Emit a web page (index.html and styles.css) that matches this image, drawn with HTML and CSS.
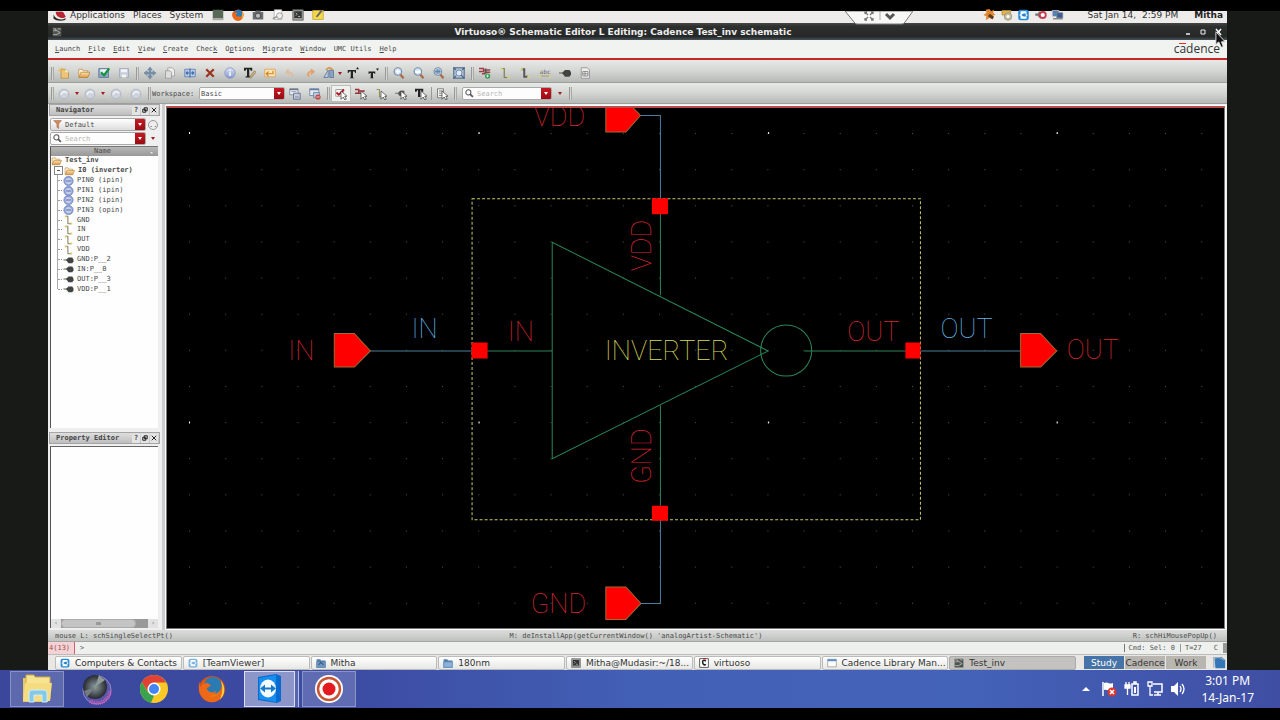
FILE: index.html
```html
<!DOCTYPE html>
<html lang="en">
<head>
<meta charset="utf-8">
<title>Virtuoso Schematic Editor</title>
<link rel="stylesheet" href="styles.css">
</head>
<body>
<svg class="defs" aria-hidden="true">
  <defs>
    <linearGradient id="gBlue" x1="0" y1="0" x2="0" y2="1"><stop offset="0" stop-color="#dde3f3"/><stop offset="1" stop-color="#8297cf"/></linearGradient>
    <linearGradient id="gFolder" x1="0" y1="0" x2="0" y2="1"><stop offset="0" stop-color="#fae4b0"/><stop offset="1" stop-color="#d89a45"/></linearGradient>
    <radialGradient id="gKnob"><stop offset="0" stop-color="#8f9c9e"/><stop offset="1" stop-color="#25292f"/></radialGradient>
    <radialGradient id="gFox"><stop offset="0" stop-color="#ffb01f"/><stop offset="1" stop-color="#d84a12"/></radialGradient>
    <symbol id="i-new" viewBox="0 0 16 16"><path d="M4 3h6l4 4v8H4z" fill="#edc578" stroke="#b28a45"/><path d="M1 1l3 4M5 0v4M0 5h4" stroke="#f4b730"/><path d="M10 3v4h4" fill="#fff0c8"/></symbol>
    <symbol id="i-folder" viewBox="0 0 16 16"><path d="M1 13V3h5l1 2h6v3" fill="#fff3d8" stroke="#c28a42"/><path d="M1 14l3-7h12l-3 7z" fill="url(#gFolder)" stroke="#b97c34"/></symbol>
    <symbol id="i-check" viewBox="0 0 16 16"><path d="M1 2h13v12H1z" fill="#8ca2c4" stroke="#54749a"/><path d="M3 3h9v6H3z" fill="#eef3f8"/><path d="M4 7l4 4 7-9" fill="none" stroke="#16943c" stroke-width="3"/></symbol>
    <symbol id="i-save" viewBox="0 0 16 16"><path d="M2 2h12v12H2z" fill="#c8ccd9" stroke="#9aa1b5"/><path d="M4 3h8v4H4zM5 10h6v4H5z" fill="#f3f4f7"/></symbol>
    <symbol id="i-move" viewBox="0 0 16 16"><path d="M8 0l3 4H9v3h3V5l4 3-4 3V9H9v3h2l-3 4-3-4h2V9H4v2L0 8l4-3v2h3V4H5z" fill="#7892ad" stroke="#536f8c" stroke-width=".6"/></symbol>
    <symbol id="i-copy" viewBox="0 0 16 16"><path d="M5 1h6l3 3v8H5z" fill="#eee" stroke="#999"/><path d="M2 5h6l2 2v8H2z" fill="#ddd" stroke="#929292"/></symbol>
    <symbol id="i-stretch" viewBox="0 0 16 16"><path d="M1 3h14v10H1z" fill="#b9cce8" stroke="#5475aa"/><path d="M8 2v12M3 8h4M9 8h4M5 6L3 8l2 2M11 6l2 2-2 2" fill="none" stroke="#426aaa" stroke-width="1.5"/></symbol>
    <symbol id="i-del" viewBox="0 0 16 16"><path d="M3 3l10 10M13 3L3 13" stroke="#9b3421" stroke-width="3"/></symbol>
    <symbol id="i-info" viewBox="0 0 16 16"><circle cx="8" cy="8" r="7" fill="url(#gBlue)" stroke="#8292c4"/><path d="M8 7v5M8 3.5v2" stroke="#fff" stroke-width="2"/></symbol>
    <symbol id="i-pinball" viewBox="0 0 16 16"><circle cx="8" cy="8" r="7.500" fill="#8d9fd2" stroke="#7083bd"/><circle cx="8" cy="8" r="5" fill="#c3cdea"/><path d="M4 8h8" stroke="#6e82be" stroke-width="2"/></symbol>
    <symbol id="i-tedit" viewBox="0 0 16 16"><path d="M0 1h11v4H9l-1-2H7v9l2 1v1H2v-1l2-1V3H3L2 5H0z" fill="#222"/><path d="M7 14l7-9 2 2-7 8z" fill="#d5b878" stroke="#6d6245" stroke-width=".8"/></symbol>
    <symbol id="i-repeat" viewBox="0 0 16 16"><path d="M1 3h14v10H1z" fill="#ffe4b4" stroke="#d99c42"/><path d="M12 5v4H4M6 6L3 9l3 3" fill="none" stroke="#c98424" stroke-width="1.5"/></symbol>
    <symbol id="i-undo" viewBox="0 0 16 16"><path d="M6 3L3 7l4 3M3 7c6-1 9 1 8 6" fill="none" stroke="#e2b997" stroke-width="2"/></symbol>
    <symbol id="i-redo" viewBox="0 0 16 16"><path d="M9 3l4 3-4 4M13 6C6 5 3 9 7 13" fill="none" stroke="#e2a26f" stroke-width="2.4"/></symbol>
    <symbol id="i-rotate" viewBox="0 0 16 16"><path d="M1 14L7 4v10z" fill="#b9c9e0" stroke="#536f99"/><path d="M9 4h5v10H9z" fill="#8ca4c4" stroke="#536f99"/><path d="M4 4c3-4 6-4 9 0" fill="none" stroke="#d98e32" stroke-width="2"/></symbol>
    <symbol id="i-tup" viewBox="0 0 16 16"><path d="M1 4h11v4h-1l-1-2H8v8l2 1H3l2-1V6H3L2 8H1z" fill="#222"/><path d="M12 3l2-3 2 3z" fill="#222"/></symbol>
    <symbol id="i-tdn" viewBox="0 0 16 16"><path d="M2 6h9v3h-1l-1-1H8v6l1 1H4l1-1V8H4L3 9H2z" fill="#222"/><path d="M12 2h4l-2 3z" fill="#222"/></symbol>
    <symbol id="i-zoom" viewBox="0 0 16 16"><path d="M9 9l5 6" stroke="#b06844" stroke-width="3"/><circle cx="6.500" cy="6" r="5" fill="#d5e3f2" stroke="#758fae" stroke-width="1.6"/></symbol>
    <symbol id="i-zin" viewBox="0 0 16 16"><use href="#i-zoom"/><path d="M6.500 3.500v5M4 6h5" stroke="#fff" stroke-width="1.8"/></symbol>
    <symbol id="i-zout" viewBox="0 0 16 16"><use href="#i-zoom"/><path d="M3 5h7v3H3z" fill="#fff"/></symbol>
    <symbol id="i-zsel" viewBox="0 0 16 16"><use href="#i-zoom"/><path d="M4 4h5v4H4zM6.500 3v6M3 6h7" fill="none" stroke="#54759c"/></symbol>
    <symbol id="i-zfit" viewBox="0 0 16 16"><path d="M1 1h14v14H1z" fill="#b9c9db" stroke="#6b839e" stroke-width="2"/><circle cx="8" cy="8" r="4" fill="#dfeaf6" stroke="#54718f"/><path d="M1 1l3 3M15 1l-3 3M1 15l3-3M11 11l4 4" stroke="#47637f" stroke-width="1.600"/></symbol>
    <symbol id="i-inst" viewBox="0 0 16 16"><path d="M0 2h6v4H0M4 9h4M6 4h9M7 7h8" fill="none" stroke="#9b4143" stroke-width="1.8"/><path d="M9 2v7" stroke="#555" stroke-width="2"/><circle cx="11.500" cy="12" r="3.500" fill="#2a9b4b"/><path d="M11.500 10v4M9.500 12h4" stroke="#fff"/></symbol>
    <symbol id="i-wire" viewBox="0 0 16 16"><path d="M3 2h4v12h5" fill="none" stroke="#817b57" stroke-width="1.600"/><path d="M2 1h3v3H2zM11 12h3v3h-3z" fill="#ddd079"/></symbol>
    <symbol id="i-wirew" viewBox="0 0 16 16"><path d="M3 3h4v10h5" fill="none" stroke="#555" stroke-width="2.600"/><path d="M2 1h3v3H2zM11 12h3v3h-3z" fill="#ddd079"/></symbol>
    <symbol id="i-label" viewBox="0 0 16 16"><text x="1" y="9" font-size="8" font-family="DejaVu Sans" fill="#666">abc</text><path d="M0 12h16" stroke="#a8a27c" stroke-width="1.500"/><path d="M0 11h3v3H0zM13 11h3v3h-3z" fill="#d9cf89"/></symbol>
    <symbol id="i-pin" viewBox="0 0 16 16"><path d="M0 8h6" stroke="#838469" stroke-width="2"/><path d="M4 8l4-4h6l2 3v3l-2 3H8z" fill="#414443"/></symbol>
    <symbol id="i-sheet" viewBox="0 0 16 16"><path d="M3 1h8l3 3v11H3z" fill="#eee" stroke="#858585"/><path d="M5 6h7v6H5zM5 9h7M8 6v6" fill="none" stroke="#777"/></symbol>
    <symbol id="i-orb" viewBox="0 0 16 16"><circle cx="8" cy="8" r="6.500" fill="#cdd2dd" stroke="#a6adbd"/><path d="M4 9c2-5 6-5 8-2" fill="none" stroke="#f4f5f8" stroke-width="2"/></symbol>
    <symbol id="i-wsave" viewBox="0 0 16 16"><path d="M1 1h11v8H1z" fill="#f7f8fb" stroke="#69768e"/><path d="M1 2h11" stroke="#69768e" stroke-width="2"/><path d="M6 7h9v8H6z" fill="#c3cbda" stroke="#536384"/><path d="M3 5h7M8 12h5" stroke="#69768e"/></symbol>
    <symbol id="i-wdel" viewBox="0 0 16 16"><path d="M1 1h12v9H1z" fill="#e4eaf3" stroke="#667c9e"/><path d="M1 2h12" stroke="#667c9e" stroke-width="2"/><path d="M6 6h8v7H6z" fill="#b8c9e1" stroke="#667c9e"/><circle cx="12" cy="12" r="3.500" fill="#c44743"/><path d="M10 12h4" stroke="#fff"/></symbol>
    <symbol id="i-arrow" viewBox="0 0 16 16"><path d="M8 4v11l3-3 2 4 2-1-2-4h3z" fill="#fff" stroke="#444"/></symbol>
    <symbol id="i-selc" viewBox="0 0 16 16"><path d="M1 2h10v9H1z" fill="#fff" stroke="#888"/><path d="M2 6l3 3 7-7" fill="none" stroke="#b51a25" stroke-width="2.500"/><use href="#i-arrow"/></symbol>
    <symbol id="i-seli" viewBox="0 0 16 16"><path d="M0 2h5v5H0M4 4h9M5 7h5" fill="none" stroke="#9b3033" stroke-width="1.800"/><use href="#i-arrow"/></symbol>
    <symbol id="i-selw" viewBox="0 0 16 16"><path d="M2 2h4v10h3" fill="none" stroke="#99905a" stroke-width="1.500"/><use href="#i-arrow"/></symbol>
    <symbol id="i-selp" viewBox="0 0 16 16"><path d="M0 7h4M4 7l3-3h5v6H6z" fill="#555" stroke="#555"/><use href="#i-arrow"/></symbol>
    <symbol id="i-selt" viewBox="0 0 16 16"><path d="M0 1h11v4H9L8 3H7v9H4V3H3L2 5H0z" fill="#222"/><use href="#i-arrow"/></symbol>
    <symbol id="i-sels" viewBox="0 0 16 16"><path d="M2 1h8v12H2zM4 4h5M4 7h5M4 10h5" fill="#eee" stroke="#666"/><use href="#i-arrow"/></symbol>
    <symbol id="i-mag" viewBox="0 0 16 16"><path d="M9 9l5 5" stroke="#555" stroke-width="3"/><circle cx="6" cy="6" r="4.500" fill="none" stroke="#555" stroke-width="1.800"/></symbol>
    <symbol id="i-funnel" viewBox="0 0 16 16"><path d="M1 1h14l-5 6v8l-3-2V7z" fill="#d28a5e" stroke="#a96c4b"/></symbol>
    <symbol id="i-tv" viewBox="0 0 16 16"><rect x="1" y="1" width="14" height="14" rx="3" fill="#2788d4"/><path d="M4 3h8v4l2 1-2 1v4H4V9L2 8l2-1z" fill="#fff"/><path d="M5 8l3-2h3v4H8z" fill="#2680cf"/></symbol>
    <symbol id="i-bfold" viewBox="0 0 16 16"><path d="M1 2h6l1 2h7v11H1z" fill="#527daa"/><path d="M1 6h14v9H1z" fill="#8bb1d7" stroke="#527daa"/></symbol>
    <symbol id="i-home" viewBox="0 0 16 16"><path d="M1 2h6l1 2h7v11H1z" fill="#527daa"/><path d="M1 6h14v9H1z" fill="#7398c0" stroke="#527daa"/><path d="M4 11l4-4 4 4" fill="none" stroke="#315e8c" stroke-width="2"/></symbol>
    <symbol id="i-term" viewBox="0 0 16 16"><path d="M1 1h14v14H1z" fill="#999" stroke="#666"/><path d="M3 3h10v9H3z" fill="#343735"/><path d="M5 5l2 2-2 2M8 10h3" fill="none" stroke="#ccc"/></symbol>
    <symbol id="i-c" viewBox="0 0 16 16"><path d="M1 1h14v14H1z" fill="#fff" stroke="#555" stroke-width="1.500"/><path d="M11 5c-4-3-6 0-5 3s3 4 5 2" fill="none" stroke="#222" stroke-width="2.500"/><path d="M7 1h4" stroke="#b22" stroke-width="2"/></symbol>
    <symbol id="i-win" viewBox="0 0 16 16"><path d="M1 2h14v12H1z" fill="#fff" stroke="#888"/><path d="M1 2h14v3H1z" fill="#5d8fbd"/></symbol>
    <symbol id="i-sch" viewBox="0 0 16 16"><path d="M1 1h14v14H1z" fill="#505451"/><path d="M2 3h4v3H2M6 5l7 4-7 4M2 12h4M9 3h5" fill="none" stroke="#bbc0b9" stroke-width="1.300"/></symbol>
    <symbol id="i-fox" viewBox="0 0 32 32"><circle cx="16" cy="16" r="15" fill="url(#gFox)"/><circle cx="17" cy="12" r="10" fill="#2a7bb4"/><path d="M2 7c0 3 0 5 1 7 2-4 5-5 8-5l4 3-5 3c1 5 7 6 11 3-1 5-8 8-13 4 8 8 20 2 19-10 5 9 0 19-11 19S-2 19 2 7z" fill="#ee6818"/><path d="M26 6c6 8 5 17-1 22 3-7 4-13 1-22z" fill="#ffd13a"/></symbol>
  </defs>
</svg>

<main class="desktop">
 <div class="remote">
  <header class="gnome-panel">
    <nav class="gnome-menu">
      <svg class="hat" viewBox="0 0 20 14"><path d="M4 1c4 1 8-2 11 1l3 6c-4 4-14 1-14-7z" fill="#b72633"/><path d="M1 5c3 8 11 8 17 5 2 4-12 5-17 1z" fill="#222"/></svg>
      <button>Applications</button><button>Places</button><button>System</button>
      <span class="launchers">
        <svg viewBox="0 0 16 16"><path d="M1 1h14v13H1z" fill="#596958"/><path d="M1 12h14v3H1z" fill="#aaa"/></svg>
        <svg><use href="#i-fox"/></svg>
        <svg viewBox="0 0 16 16"><path d="M1 4h3l1-2h6l1 2h3v10H1z" fill="#686e70"/><circle cx="8" cy="9" r="3.500" fill="#bbb" stroke="#333"/></svg>
        <svg viewBox="0 0 16 16"><path d="M3 1h10v13H3z" fill="#fff" stroke="#aaa"/><circle cx="10" cy="9" r="4" fill="#eee" stroke="#888"/><path d="M1 13l6-3" stroke="#999" stroke-width="2"/></svg>
        <svg><use href="#i-term"/></svg>
        <svg viewBox="0 0 16 16"><path d="M1 2h14v12H1z" fill="#f2d94b" stroke="#c4a82c"/><path d="M5 10l7-9 2 2-7 8z" fill="#666"/></svg>
      </span>
    </nav>
    <div class="gnome-status">
      <svg viewBox="0 0 16 16"><path d="M8 0l2 3 4-2-1 4 3 3-4 1 1 5-5-2-5 3 1-5-4-2 4-3-1-4z" fill="#e08732"/><path d="M7 8l6 4" stroke="#603818" stroke-width="4"/></svg>
      <svg viewBox="0 0 16 16"><path d="M2 2h12l-2 6H2z" fill="#e7b63c" stroke="#a98a4a"/><circle cx="10" cy="10" r="5" fill="#c7bda2" stroke="#938b77"/><circle cx="10" cy="10" r="2" fill="#fff"/></svg>
      <svg><use href="#i-tv"/></svg>
      <svg viewBox="0 0 16 16"><path d="M1 6h3l4-4v11L4 9H1z" fill="#777"/><circle cx="11" cy="8" r="4" fill="#fff" stroke="#c63f50" stroke-width="2.500"/></svg>
      <svg viewBox="0 0 16 16"><path d="M1 2h9v8H1z" fill="#577fb2" stroke="#ccc"/><path d="M7 5h8v7H7z" fill="#365d98" stroke="#888"/><path d="M2 13h13" stroke="#888" stroke-width="2"/></svg>
      <time>Sat Jan 14,&nbsp; 2:59 PM</time><strong>Mitha</strong>
    </div>
    <div class="tv-tab"><svg viewBox="0 0 68 14" preserveAspectRatio="none"><path d="M0 0h68l-8 11q-1 2-3 2H12q-2 0-3-2z" fill="#f8f8f7" stroke="#777"/><path d="M20 1l3 3M28 1l-3 3M20 9l3-3M28 9l-3-3M20 3V1h2M26 1h2v2M20 7v2h2M26 9h2V7" fill="none" stroke="#777" stroke-width="1.300"/><path d="M35 0v9" stroke="#aaa"/><path d="M41 3l4 4 4-4" fill="none" stroke="#555" stroke-width="3"/></svg></div>
  </header>

  <section class="window">
    <header class="titlebar">
      <svg class="app"><use href="#i-sch"/></svg>
      <h1>Virtuoso® Schematic Editor L Editing: Cadence Test_inv schematic</h1>
      <div class="winbtns"><button aria-label="Minimize"><svg viewBox="0 0 8 8"><path d="M2 6h4" stroke="#eee" stroke-width="1.500"/></svg></button><button aria-label="Maximize"><svg viewBox="0 0 8 8"><path d="M2 2h4v4H2z" fill="none" stroke="#eee"/></svg></button><button aria-label="Close"><svg viewBox="0 0 8 8"><path d="M2 1l5 6M7 1L2 7" stroke="#fff" stroke-width="1.500"/></svg></button></div>
    </header>
    <nav class="menubar">
      <button><u>L</u>aunch</button><button><u>F</u>ile</button><button><u>E</u>dit</button><button><u>V</u>iew</button><button><u>C</u>reate</button><button>Chec<u>k</u></button><button>O<u>p</u>tions</button><button><u>M</u>igrate</button><button><u>W</u>indow</button><button>UMC Utils</button><button><u>H</u>elp</button>
      <span class="brand">c<span class="macron">a</span>dence</span>
    </nav>
    <div class="toolbar">
      <i class="grip"></i>
      <button aria-label="New"><svg><use href="#i-new"/></svg></button><button aria-label="Open"><svg><use href="#i-folder"/></svg></button><button aria-label="Check and save"><svg><use href="#i-check"/></svg></button><button aria-label="Save"><svg><use href="#i-save"/></svg></button>
      <i class="grip wide"></i>
      <button aria-label="Move"><svg><use href="#i-move"/></svg></button><button aria-label="Copy"><svg><use href="#i-copy"/></svg></button><button aria-label="Stretch"><svg><use href="#i-stretch"/></svg></button><button aria-label="Delete"><svg><use href="#i-del"/></svg></button><button aria-label="Properties"><svg><use href="#i-info"/></svg></button><button aria-label="Edit text"><svg><use href="#i-tedit"/></svg></button><button aria-label="Repeat"><svg><use href="#i-repeat"/></svg></button><button aria-label="Undo"><svg><use href="#i-undo"/></svg></button><button aria-label="Redo"><svg><use href="#i-redo"/></svg></button><button class="narrow" aria-label="Rotate"><svg><use href="#i-rotate"/></svg></button><button class="drop" aria-label="Rotate options"></button><button aria-label="Increase text"><svg><use href="#i-tup"/></svg></button><button aria-label="Decrease text"><svg><use href="#i-tdn"/></svg></button>
      <i class="grip wide"></i>
      <button aria-label="Zoom in"><svg><use href="#i-zin"/></svg></button><button aria-label="Zoom out"><svg><use href="#i-zout"/></svg></button><button aria-label="Zoom to selection"><svg><use href="#i-zsel"/></svg></button><button aria-label="Fit"><svg><use href="#i-zfit"/></svg></button>
      <i class="grip wide"></i>
      <button aria-label="Instance"><svg><use href="#i-inst"/></svg></button><button aria-label="Wire"><svg><use href="#i-wire"/></svg></button><button aria-label="Wide wire"><svg><use href="#i-wirew"/></svg></button><button aria-label="Label"><svg><use href="#i-label"/></svg></button><button aria-label="Pin"><svg><use href="#i-pin"/></svg></button><button aria-label="Sheet"><svg><use href="#i-sheet"/></svg></button>
    </div>
    <div class="toolbar second">
      <i class="grip"></i>
      <button aria-label="Back"><svg><use href="#i-orb"/></svg></button><button class="drop" aria-label="Back history"></button><button aria-label="Forward"><svg><use href="#i-orb"/></svg></button><button class="drop" aria-label="Forward history"></button><button aria-label="Up"><svg><use href="#i-orb"/></svg></button><button aria-label="Top"><svg><use href="#i-orb"/></svg></button>
      <i class="grip wide"></i>
      <label class="ws" for="workspace">Workspace:</label>
      <span class="field workspace"><select id="workspace"><option>Basic</option></select><i class="red"></i></span>
      <button aria-label="Save workspace"><svg><use href="#i-wsave"/></svg></button><button aria-label="Delete workspace"><svg><use href="#i-wdel"/></svg></button>
      <i class="grip wide"></i>
      <button class="on" aria-label="Select all types"><svg><use href="#i-selc"/></svg></button><button aria-label="Select instances"><svg><use href="#i-seli"/></svg></button><button aria-label="Select wires"><svg><use href="#i-selw"/></svg></button><button aria-label="Select pins"><svg><use href="#i-selp"/></svg></button><button aria-label="Select text"><svg><use href="#i-selt"/></svg></button>
      <i class="rule"></i>
      <button aria-label="Selection form"><svg><use href="#i-sels"/></svg></button>
      <i class="grip wide"></i>
      <span class="field find"><svg><use href="#i-mag"/></svg><input aria-label="Search design" placeholder="Search"><button class="red" aria-label="Search options"></button></span>
      <button class="drop far" aria-label="More"></button>
      <i class="grip"></i>
    </div>

    <div class="work">
      <aside class="docks">
        <section class="dock nav">
          <header><h2>Navigator</h2><button>?</button><button aria-label="Float"><svg viewBox="0 0 8 8"><path d="M3 1h4v4H3zM1 3h4v4H1z" fill="none" stroke="#222" stroke-width="1.300"/></svg></button><button aria-label="Close"><svg viewBox="0 0 8 8"><path d="M1 1l6 6M7 1L1 7" stroke="#222" stroke-width="1.300"/></svg></button></header>
          <div class="filter"><span class="field grey"><svg><use href="#i-funnel"/></svg><select aria-label="Filter"><option>Default</option></select><i class="red"></i></span><button class="round" aria-label="Filter options">..</button></div>
          <div class="filter"><span class="field"><svg><use href="#i-mag"/></svg><input aria-label="Search navigator" placeholder="Search"><button class="red" aria-label="Search options"></button></span><button class="drop" aria-label="More"></button></div>
          <div class="tree">
            <div class="treehead"><span>Name</span><svg viewBox="0 0 8 6"><path d="M1 5l3-3 3 3z" fill="#eee" stroke="#888" stroke-width=".6"/></svg></div>
            <ul>
              <li class="root"><svg><use href="#i-folder"/></svg>Test_inv</li>
              <li class="inst"><svg><use href="#i-folder"/></svg>I0 (inverter)</li>
              <li><svg><use href="#i-pinball"/></svg>PIN0 (ipin)</li>
              <li><svg><use href="#i-pinball"/></svg>PIN1 (ipin)</li>
              <li><svg><use href="#i-pinball"/></svg>PIN2 (ipin)</li>
              <li><svg><use href="#i-pinball"/></svg>PIN3 (opin)</li>
              <li><svg><use href="#i-wire"/></svg>GND</li>
              <li><svg><use href="#i-wire"/></svg>IN</li>
              <li><svg><use href="#i-wire"/></svg>OUT</li>
              <li><svg><use href="#i-wire"/></svg>VDD</li>
              <li><svg><use href="#i-pin"/></svg>GND:P__2</li>
              <li><svg><use href="#i-pin"/></svg>IN:P__0</li>
              <li><svg><use href="#i-pin"/></svg>OUT:P__3</li>
              <li><svg><use href="#i-pin"/></svg>VDD:P__1</li>
            </ul>
          </div>
        </section>
        <section class="dock props">
          <header><h2>Property Editor</h2><button>?</button><button aria-label="Float"><svg viewBox="0 0 8 8"><path d="M3 1h4v4H3zM1 3h4v4H1z" fill="none" stroke="#222" stroke-width="1.300"/></svg></button><button aria-label="Close"><svg viewBox="0 0 8 8"><path d="M1 1l6 6M7 1L1 7" stroke="#222" stroke-width="1.300"/></svg></button></header>
          <div class="propbox"><div class="hscroll"><button aria-label="Scroll left">‹</button><i><b></b></i><button aria-label="Scroll right">›</button></div></div>
        </section>
      </aside>
      <div class="canvas">
        <svg viewBox="167 108 1057 519" preserveAspectRatio="xMidYMid slice" role="img" aria-label="Inverter schematic">
          <defs><pattern id="dots" x="190" y="133" width="36.08" height="36.06" patternUnits="userSpaceOnUse"><rect width="1" height="1" fill="#555"/></pattern></defs>
          <rect x="167" y="108" width="1057" height="519" fill="#000"/>
          <rect x="167" y="108" width="1057" height="519" fill="url(#dots)"/>
          <path d="M190 132h1v2h-1zM479 132h1v2h-1zM768 132h1v2h-1zM1056 132h1v2h-1zM190 421h1v2h-1zM479 421h1v2h-1zM768 421h1v2h-1zM1056 421h1v2h-1z" fill="#fff"/>
          <g class="wire"><path d="M640 115.500h20.500V199M371 350.500h102M920 350.500h101M660.500 519v83.500H640"/></g>
          <g class="device"><path d="M552.500 242v216L768 350.500zM660.500 213v82M660.500 405v100M487 350.500h65M804 350.500h102"/><circle cx="786" cy="350" r="25.500"/></g>
          <path class="bbox" d="M472.500 198.500h447.500v320.500H472.500z"/>
          <g class="pin"><path d="M606 100h20l14.500 15.500L626 132h-20zM606 586h20l15 16.500-15 16h-20zM335 333h20l16 17.500-16 16h-20zM1020 333h20l16 17.500-16 16h-20z"/></g>
          <path d="M652 198h16v16h-16zM652 505h16v15h-16zM472 342h16v16h-16zM905 342h15v16h-15z" fill="#f00"/>
          <g class="lbl red-l"><text x="534" y="126">VDD</text><text x="531" y="612">GND</text><text x="289" y="360">IN</text><text x="508" y="341">IN</text><text x="847" y="341">OUT</text><text x="1066" y="359">OUT</text><text transform="translate(651 271) rotate(-90)">VDD</text><text transform="translate(651 483) rotate(-90)">GND</text></g>
          <g class="lbl blue-l"><text x="412" y="338">IN</text><text x="940" y="338">OUT</text></g>
          <g class="lbl yel-l"><text x="605" y="360">INVERTER</text></g>
        </svg>
      </div>
    </div>
    <footer class="mouse"><span>mouse L: schSingleSelectPt()</span><span>M: deInstallApp(getCurrentWindow() 'analogArtist-Schematic')</span><span>R: schHiMousePopUp()</span></footer>
    <footer class="prompt"><span class="count">4(13)</span><span class="gt">&gt;</span><span class="cmd">Cmd: Sel: 0</span><span class="temp">T=27</span><span class="cc">C</span><i></i></footer>
  </section>

  <footer class="gnome-tasks">
    <div class="tasks">
      <button><svg><use href="#i-tv"/></svg><span>Computers &amp; Contacts</span></button>
      <button><svg class="dim"><use href="#i-tv"/></svg><span>[TeamViewer]</span></button>
      <button><svg><use href="#i-home"/></svg><span>Mitha</span></button>
      <button><svg><use href="#i-bfold"/></svg><span>180nm</span></button>
      <button><svg><use href="#i-term"/></svg><span>Mitha@Mudasir:~/18...</span></button>
      <button><svg><use href="#i-c"/></svg><span>virtuoso</span></button>
      <button><svg><use href="#i-win"/></svg><span>Cadence Library Man...</span></button>
      <button class="active"><svg><use href="#i-sch"/></svg><span>Test_inv</span></button>
    </div>
    <div class="spaces"><button class="cur">Study</button><button>Cadence</button><button>Work</button></div>
    <svg class="trash" viewBox="0 0 16 16"><path d="M2 3l8-2 5 4v10H3z" fill="#3377b8"/><path d="M1 14V2h8l4 3" fill="none" stroke="#99a9bb" stroke-width="1.500"/></svg>
  </footer>
  <svg class="cursor" viewBox="0 0 12 18"><path d="M1 0v14l3-3 3 6 2-1-2-5h4z" fill="#111" stroke="#ddd"/></svg>
 </div>

 <footer class="taskbar">
  <div class="apps">
    <button class="open first" aria-label="Explorer"><svg viewBox="0 0 32 32"><path d="M2 5h10l2 3h13v21H2z" fill="#e7c866"/><path d="M5 2h8l1 2h15v22H5z" fill="#f7e493" stroke="#cda944"/><path d="M4 10h27l-2 18H2z" fill="#f5dc80"/><path d="M8 29V20q0-3 3-3h12q3 0 3 3v9h-5v-7h-8v7z" fill="#86c8e8" stroke="#cfedf8"/></svg></button>
    <button aria-label="Recorder"><svg viewBox="0 0 32 32"><circle cx="17" cy="17" r="14" fill="#5557a6" stroke="#9c8bc8"/><path d="M10 28a13 13 0 0 0 20-10" fill="none" stroke="#cf55b8" stroke-width="4" stroke-dasharray="1 1"/><circle cx="15" cy="14" r="12" fill="url(#gKnob)"/><path d="M15 14L19 2l6 5z" fill="#8d9a98"/><path d="M15 14L4 18l3 6z" fill="#747e80"/></svg></button>
    <button aria-label="Chrome"><svg viewBox="0 0 32 32"><circle cx="16" cy="16" r="14" fill="#fbc926"/><path d="M16 2a14 14 0 0 1 12.200 7.500H16L10 19 3.800 9A14 14 0 0 1 16 2z" fill="#df4335"/><path d="M3.800 9L10 19.500l6 3L13 29.700A14 14 0 0 1 3.800 9z" fill="#3ba34f"/><circle cx="16" cy="16" r="6.500" fill="#fff"/><circle cx="16" cy="16" r="5" fill="#4285f4"/></svg></button>
    <button aria-label="Firefox"><svg viewBox="0 0 32 32"><use href="#i-fox" x="2" y="2" width="28" height="28"/></svg></button>
    <button class="open stack" aria-label="TeamViewer"><svg viewBox="0 0 32 32"><path d="M4 4l18-3 5 2v25l-4 2L4 27z" fill="#066bd1"/><path d="M5 5l17-3v27L5 26z" fill="#178eed"/><ellipse cx="14" cy="15.500" rx="8" ry="9" fill="#f5fafe"/><path d="M6 15.500l5-4v3h6v-3l5 4-5 4v-3h-6v3z" fill="#167ac9"/></svg></button>
    <button class="open last" aria-label="Screen recorder"><svg viewBox="0 0 32 32"><circle cx="16" cy="16" r="14" fill="#fff"/><circle cx="16" cy="16" r="11" fill="none" stroke="#c95433" stroke-width="2.500"/><circle cx="16" cy="16" r="6.500" fill="#e31a1f"/></svg></button>
  </div>
  <div class="tray">
    <svg viewBox="0 0 16 16"><path d="M4 10l4-4 4 4z" fill="#fff"/></svg>
    <svg viewBox="0 0 16 16"><path d="M2 1v14" stroke="#fff" stroke-width="1.500"/><path d="M3 2c4-2 5 2 9 0v7c-4 2-5-1-9 0z" fill="#fff"/><circle cx="11" cy="11" r="4.500" fill="#d9372f"/><path d="M9 9l4 4M13 9l-4 4" stroke="#fff" stroke-width="1.500"/></svg>
    <svg viewBox="0 0 16 16"><path d="M8 3h6v11H8zM10 1h2v2h-2z" fill="none" stroke="#fff" stroke-width="1.500"/><path d="M10 6h2v6h-2z" fill="#fff"/><path d="M1 4h5v3H1zM2 1v3M5 1v3M3.500 7v7" fill="#fff" stroke="#fff" stroke-width="1.300"/></svg>
    <svg viewBox="0 0 16 16"><path d="M6 3h9v8H7M11 11v3M7 14h7" fill="none" stroke="#fff" stroke-width="1.500"/><path d="M1 1h4v4H1zM3 5v9h3" fill="none" stroke="#fff" stroke-width="1.300"/></svg>
    <svg viewBox="0 0 16 16"><path d="M1 5h3l4-4v14l-4-4H1z" fill="#fff"/><path d="M10 5q2 3 0 6M12 3q4 5 0 10" fill="none" stroke="#fff" stroke-width="1.300"/></svg>
    <div class="clock"><time>3:01 PM</time><time>14-Jan-17</time></div>
  </div>
 </footer>
</main>
</body>
</html>
```
FILE: styles.css
```css
* { box-sizing: border-box; }
body { margin: 0; background: #000; font-family: "DejaVu Sans", sans-serif; font-size: 9px; color: #333; }
button, select, input { font: inherit; color: inherit; border: 0; padding: 0; margin: 0; background: none; }
select { appearance: none; }
svg { display: block; }
h1, h2, ul { margin: 0; padding: 0; }
.defs { position: absolute; width: 0; height: 0; }

.desktop { display: flex; flex-direction: column; height: 100vh; padding: 11px 0 12px; }
.remote { position: relative; flex: 1; min-height: 0; display: flex; flex-direction: column; border-left: 48px solid #181a17; border-right: 53px solid #181a17; background: #efeeec; }

/* GNOME top panel */
.gnome-panel { position: relative; flex: none; height: 12px; display: flex; justify-content: space-between; background: #edecea; line-height: 8px; z-index: 2; }
.gnome-menu, .gnome-status, .launchers { display: flex; }
.gnome-menu button { line-height: 8px; height: 8px; margin-right: 8px; color: #333; }
.hat { width: 16px; height: 10px; margin: 0 2px 0 4px; }
.launchers { gap: 8px; margin-left: 1px; }
.launchers svg { width: 12px; height: 12px; margin-top: -2px; }
.gnome-status { padding-right: 4px; }
.gnome-status svg { width: 13px; height: 12px; margin: -2px 4px 0 0; }
.gnome-status time { margin: 0 16px 0 20px; }
.gnome-status strong { color: #222; }
.tv-tab { position: absolute; left: 797px; top: 0; width: 68px; }
.tv-tab svg { width: 100%; height: 14px; }

/* Editor window */
.window { flex: 1; min-height: 0; display: flex; flex-direction: column; font-family: "DejaVu Sans Mono", monospace; font-size: 7px; color: #4a4a4a; }
.titlebar { flex: none; height: 17px; display: flex; align-items: center; background: linear-gradient(#454744, #2d302e 20%, #252826 80%, #48525a); color: #eee; padding: 0 5px 0 4px; }
.titlebar h1 { flex: 1; text-align: center; font: bold 9px/16px "DejaVu Sans", sans-serif; }
.titlebar .app { width: 10px; height: 10px; }
.winbtns { display: flex; gap: 7px; }
.winbtns svg { width: 8px; height: 8px; }
.menubar { flex: none; height: 20px; display: flex; align-items: center; gap: 8px; padding: 0 7px 0 7px; background: #f1f3f1; border-bottom: 2px solid #c22626; }
.brand { margin-left: auto; font: 12px/16px "Open Sans", sans-serif; color: #333; }
.macron { border-top: 1px solid #d33; display: inline-block; line-height: 10px; }
.toolbar { flex: none; height: 23px; display: flex; align-items: center; background: linear-gradient(#e8e9e7, #d4d6d4 50%, #b7b9b7); border-bottom: 1px solid #9c9f9c; padding: 4px 0 0 3px; }
.toolbar.second { height: 21px; padding-top: 1px; }
.toolbar > button { flex: none; width: 20px; height: 17px; display: grid; place-items: center; }
.toolbar > button.narrow { width: 17px; }
.toolbar button svg { width: 12px; height: 12px; }
.toolbar .on { background: #f0f0ef; border: 1px solid #bbb; }
.grip { flex: none; width: 3px; height: 13px; border-left: 1px solid #999; border-right: 1px solid #aaa; background: #d5d5d5; }
.grip.wide { margin: 0 1px 0 2px; }
.rule { width: 1px; height: 13px; background: #999; }
.toolbar > .drop, .drop { width: 6px; height: 8px; display: grid; place-items: center; }
.drop::after, .red::after { content: ""; border: 2px solid transparent; border-top: 3px solid #a31a1f; border-bottom: 0; }
.toolbar > .far { margin: 0 6px 0 5px; }
.field { display: flex; align-items: center; height: 13px; border: 1px solid #aaa; border-radius: 2px; background: #fdfdfd; overflow: hidden; }
.field select, .field input { flex: 1; min-width: 0; width: 0; outline: 0; }
.field input::placeholder { color: #b5b5b5; opacity: 1; }
.field svg { width: 9px; height: 9px; margin: 0 3px 0 2px; flex: none; }
.red { flex: none; width: 10px; height: 12px; display: grid; place-items: center; background: linear-gradient(#c81923, #950a12); }
.red::after { border-top-color: #fff; }
.ws { width: 47px; }
.workspace { width: 86px; padding-left: 1px; }
.find { width: 90px; margin-left: 4px; }

/* Docks and canvas */
.work { flex: 1; min-height: 0; display: flex; background: #f0f0f0; }
.docks { flex: none; width: 118px; display: flex; flex-direction: column; gap: 4px; background: #efefef; border-right: 4px solid #cdced0; padding: 0 2px 2px 1px; }
.dock { display: flex; flex-direction: column; min-height: 0; }
.nav { flex: 323; }
.props { flex: 195; }
.dock header { flex: none; height: 12px; display: flex; align-items: center; gap: 1px; padding: 0 1px 0 6px; background: linear-gradient(#dedede, #bebebe); border: 1px solid #a5a5a5; }
.dock h2 { flex: 1; font-size: 7px; font-weight: bold; color: #444; white-space: nowrap; }
.dock header button { width: 8px; height: 9px; display: grid; place-items: center; background: #e4e4e4; font-weight: bold; }
.dock header svg { width: 6px; height: 6px; }
.filter { flex: none; display: flex; align-items: center; gap: 2px; margin: 2px 2px 0 1px; }
.filter + .filter { margin-top: 1px; }
.filter .field { flex: 1; }
.filter .drop { width: 10px; }
.grey { background: linear-gradient(#fff, #ddd); }
.round { width: 10px; height: 10px; border: 1px solid #999; border-radius: 50%; line-height: 6px; background: #eee; }
.tree { flex: 1; min-height: 0; margin: 1px 2px 0 1px; background: #fdfefd; border-left: 1px solid #555; border-top: 1px solid #777; }
.treehead { position: relative; height: 9px; background: linear-gradient(#b8b8b8, #989898); text-align: center; line-height: 9px; padding-right: 4px; }
.treehead svg { position: absolute; right: 3px; top: 2px; width: 7px; height: 6px; }
.tree ul { height: 138px; display: grid; grid-auto-rows: minmax(0, 1fr); list-style: none; background: linear-gradient(#aaa, #aaa) 6px 18px / 1px 115px no-repeat; }
.tree li { display: flex; align-items: center; gap: 3px; padding-left: 7px; white-space: nowrap; line-height: 9px; }
.tree li::before { content: ""; width: 4px; border-top: 1px dotted #999; margin-right: -2px; }
.tree li svg { flex: none; width: 11px; height: 10px; }
.tree .root { padding-left: 0; font-weight: bold; }
.tree .root::before { display: none; }
.tree .inst { padding-left: 3px; font-weight: bold; }
.tree .inst::before { width: 7px; height: 7px; border: 1px solid #888; background: linear-gradient(#555, #555) center / 3px 1px no-repeat #fff; }
.propbox { flex: 1; margin: 2px 2px 0 1px; display: flex; align-items: flex-end; border-left: 1px solid #555; border-top: 1px solid #666; background: #fdfefd; }
.hscroll { flex: 1; height: 9px; display: flex; background: #999; }
.hscroll button { width: 10px; background: #e2e2e2; line-height: 7px; color: #888; }
.hscroll i { flex: 1; }
.hscroll b { display: block; width: 86%; height: 9px; border: 1px solid #aaa; border-radius: 4px; background: linear-gradient(#999, #999) center / 5px 3px no-repeat #c3c4c3; }
.canvas { flex: 1; min-width: 0; margin: 2px 2px 1px 0; border: 1px solid #777; border-top: 2px solid #b94d4d; outline: 1px solid #fff; background: #000; }
.canvas svg { width: 100%; height: 100%; }
.wire { fill: none; stroke: #4a7f9e; }
.device { fill: none; stroke: #2b8558; }
.bbox { fill: none; stroke: #c8c868; stroke-dasharray: 3 2; }
.pin { fill: #f00; stroke: #a06a30; stroke-width: 1; }
.lbl { font-family: Roboto, sans-serif; font-weight: 100; font-size: 27px; }
.red-l { fill: #d8262e; }
.blue-l { fill: #64b4e6; }
.yel-l { fill: #dcdc5c; }

/* Status rows */
.mouse { flex: none; height: 12px; display: grid; grid-template-columns: 1fr auto 1fr; align-items: center; padding: 0 10px 0 7px; background: linear-gradient(#dcdedc, #bfc1bf); border-bottom: 1px solid #a5a5a5; }
.mouse span:last-child { text-align: right; }
.prompt { flex: none; height: 13px; display: flex; align-items: center; background: #eef0ee; color: #555; border-bottom: 1px solid #bbb; }
.count { align-self: stretch; width: 27px; line-height: 13px; padding-left: 1px; background: #f3d3d6; border-right: 1px solid #c66; color: #a24a50; }
.gt { margin-left: 5px; }
.cmd { margin-left: auto; border-left: 1px solid #777; padding: 0 5px 0 4px; }
.temp { border-left: 1px solid #999; padding: 0 12px 0 4px; }
.prompt i { width: 4px; height: 10px; margin-left: 5px; background: #999; }

/* GNOME window list */
.gnome-tasks { flex: none; height: 15px; display: flex; align-items: center; padding: 0 1px 0 7px; background: #e8e7e4; }
.tasks { flex: 1; min-width: 0; display: grid; grid-template-columns: repeat(8, minmax(0, 1fr)); gap: 1px; }
.tasks button { height: 14px; display: flex; align-items: center; gap: 5px; padding: 0 4px; border: 1px solid #bbb; border-radius: 2px; background: linear-gradient(#fff, #e7e7e5); overflow: hidden; white-space: nowrap; }
.tasks svg { flex: none; width: 10px; height: 10px; }
.tasks .dim { opacity: .6; }
.tasks .active { background: #c3c2bf; border-color: #aaa; }
.spaces { display: flex; gap: 1px; margin: 0 7px 0 8px; }
.spaces button { width: 40px; height: 13px; background: #b9b6b1; }
.spaces .cur { background: #4674a8; color: #fff; }
.trash { width: 13px; height: 13px; }
.cursor { position: absolute; right: 1px; top: 20px; width: 11px; height: 18px; z-index: 3; }

/* Windows taskbar */
.taskbar { flex: none; height: 38px; display: flex; justify-content: space-between; background: linear-gradient(90deg, #3a479b, #3c4ca3 28%, #4260b6 50%, #4363b9 75%, #3f4ea3); color: #fff; }
.apps { display: flex; align-items: center; padding-left: 10px; }
.apps button { width: 58px; height: 36px; display: grid; place-items: center; }
.apps svg { width: 32px; height: 32px; }
.apps .open { width: 54px; background: rgb(255 255 255 / 18%); border: 1px solid rgb(255 255 255 / 28%); }
.apps .first { margin-right: 3px; }
.apps .stack { width: 51px; margin: 0 7px 0 3px; background: rgb(255 255 255 / 42%); border-color: #dde; box-shadow: 3px 0 0 #5663ad, 4px 0 0 #bcc4e5; }
.tray { display: flex; align-items: center; gap: 7px; padding-right: 26px; }
.tray svg { width: 16px; height: 16px; }
.clock { display: grid; gap: 1px; margin-left: 8px; text-align: center; font: 12px/16px "Noto Sans", sans-serif; }
```
